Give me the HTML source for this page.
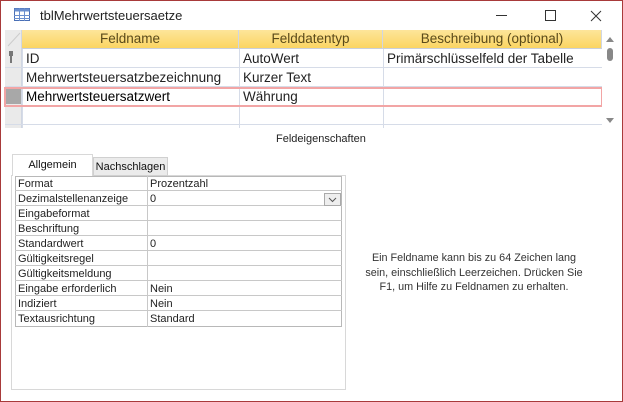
<!DOCTYPE html>
<html><head><meta charset="utf-8"><style>
*{margin:0;padding:0;box-sizing:border-box}
body{width:623px;height:402px;background:#fff;position:relative;overflow:hidden;font-family:"Liberation Sans",sans-serif}
.win{position:absolute;left:0;top:0;width:623px;height:402px;border:1px solid #a83a3a}
.a{position:absolute;white-space:nowrap}
.t13{font-size:13.5px;color:#222}
.hd{position:absolute;top:30px;height:19px;background:linear-gradient(#fde59a,#fbd562);border-right:1px solid #d0d6e2;border-bottom:1px solid #c9cfdb;font-size:13.5px;color:#5a4a1a;text-align:center;line-height:18px}
.hl{position:absolute;height:1px;background:#d6dce8;left:5px;width:597px}
.vl{position:absolute;width:1px;background:#d6dce8;top:49px;height:79px}
.pt{position:absolute;font-size:11px;color:#222;line-height:15px}
.pr{position:absolute;left:15px;width:327px;height:15px;border-bottom:1px solid #c8c8c8}
</style></head><body>
<div class="win"></div>
<svg class="a" style="left:14px;top:8px" width="16" height="13" viewBox="0 0 16 13"><rect x="0.5" y="0.5" width="15" height="12" fill="#fff" stroke="#4a6fb5"/><rect x="0.5" y="0.5" width="15" height="3" fill="#6b8fcf"/><path d="M0 7.5H16M0 10.5H16M5.5 0V13M10.5 0V13" stroke="#6b8fcf"/></svg>
<div class="a" style="left:40px;top:8px;font-size:13px;color:#222">tblMehrwertsteuersaetze</div>
<div class="a" style="left:496px;top:15px;width:11px;height:1px;background:#333"></div>
<div class="a" style="left:545px;top:10px;width:11px;height:11px;border:1px solid #333"></div>
<svg class="a" style="left:590px;top:10px" width="12" height="12"><path d="M1 1L11 11M11 1L1 11" stroke="#333" stroke-width="1"/></svg>
<div class="a" style="left:5px;top:30px;width:17px;height:98px;background:#eaeaea;border-right:1px solid #d0d6e2"></div>
<svg class="a" style="left:6px;top:31px" width="15" height="17"><path d="M14 2L2 15" stroke="#ccc"/></svg>
<div class="hd" style="left:22px;width:217px">Feldname</div>
<div class="hd" style="left:239px;width:144px">Felddatentyp</div>
<div class="hd" style="left:383px;width:219px">Beschreibung (optional)</div>
<div class="hl" style="top:67px"></div><div class="hl" style="top:86px"></div><div class="hl" style="top:105px"></div><div class="hl" style="top:124px"></div>
<div class="vl" style="left:22px"></div><div class="vl" style="left:239px"></div><div class="vl" style="left:383px"></div>
<svg class="a" style="left:8px;top:51px" width="6" height="12"><rect x="1" y="0" width="4" height="5" fill="#777"/><rect x="2" y="5" width="2" height="7" fill="#777"/></svg>
<div class="a" style="left:6px;top:89px;width:15px;height:15px;background:#a8a8a8"></div>
<div class="a" style="left:4px;top:87px;width:599px;height:20px;border:2px solid #f2a5a5"></div>
<div class="a t13" style="left:26px;top:51px">ID</div>
<div class="a t13" style="left:243px;top:51px">AutoWert</div>
<div class="a t13" style="left:387px;top:51px">Primärschlüsselfeld der Tabelle</div>
<div class="a t13" style="left:26px;top:70px">Mehrwertsteuersatzbezeichnung</div>
<div class="a t13" style="left:243px;top:70px">Kurzer Text</div>
<div class="a t13" style="left:26px;top:89px;color:#000">Mehrwertsteuersatzwert</div>
<div class="a t13" style="left:243px;top:89px">Währung</div>
<div class="a" style="left:602px;top:30px;width:17px;height:98px;background:#fff"></div>
<svg class="a" style="left:604px;top:34px" width="12" height="92"><path d="M2 8L6 3L10 8Z" fill="#888"/><rect x="3" y="14" width="6" height="13" rx="3" fill="#888"/><path d="M2 84L6 89L10 84Z" fill="#888"/></svg>
<div class="a" style="left:276px;top:133px;font-size:11px;color:#222">Feldeigenschaften</div>
<div class="a" style="left:11px;top:175px;width:335px;height:215px;border:1px solid #d8d8d8"></div>
<div class="a" style="left:93px;top:157px;width:75px;height:19px;background:#ebebeb;border:1px solid #d0d0d0;font-size:11px;color:#111;text-align:center;line-height:18px">Nachschlagen</div>
<div class="a" style="left:12px;top:154px;width:81px;height:22px;background:#fff;border:1px solid #d8d8d8;border-bottom:none;font-size:11px;color:#111;text-align:center;line-height:20px">Allgemein</div>
<div class="a" style="left:15px;top:176px;width:327px;height:151px;border:1px solid #b8b8b8"></div>
<div class="a" style="left:147px;top:176px;width:1px;height:151px;background:#c8c8c8"></div>
<div class="pr" style="top:176px"></div><div class="pr" style="top:191px"></div><div class="pr" style="top:206px"></div><div class="pr" style="top:221px"></div><div class="pr" style="top:236px"></div><div class="pr" style="top:251px"></div><div class="pr" style="top:266px"></div><div class="pr" style="top:281px"></div><div class="pr" style="top:296px"></div>
<div class="pt" style="left:18px;top:177px">Format<br>Dezimalstellenanzeige<br>Eingabeformat<br>Beschriftung<br>Standardwert<br>Gültigkeitsregel<br>Gültigkeitsmeldung<br>Eingabe erforderlich<br>Indiziert<br>Textausrichtung</div>
<div class="pt" style="left:150px;top:177px">Prozentzahl<br>0<br><br><br>0<br><br><br>Nein<br>Nein<br>Standard</div>
<div class="a" style="left:324px;top:193px;width:17px;height:13px;border:1px solid #aaa;background:#eee"></div>
<svg class="a" style="left:328px;top:197px" width="9" height="6"><path d="M1 1L4.5 4.5L8 1" stroke="#555" fill="none"/></svg>
<div class="a" style="left:354px;top:251px;width:240px;font-size:10.8px;line-height:14.5px;color:#333;text-align:center">Ein Feldname kann bis zu 64 Zeichen lang<br>sein, einschließlich Leerzeichen. Drücken Sie<br>F1, um Hilfe zu Feldnamen zu erhalten.</div>
</body></html>
